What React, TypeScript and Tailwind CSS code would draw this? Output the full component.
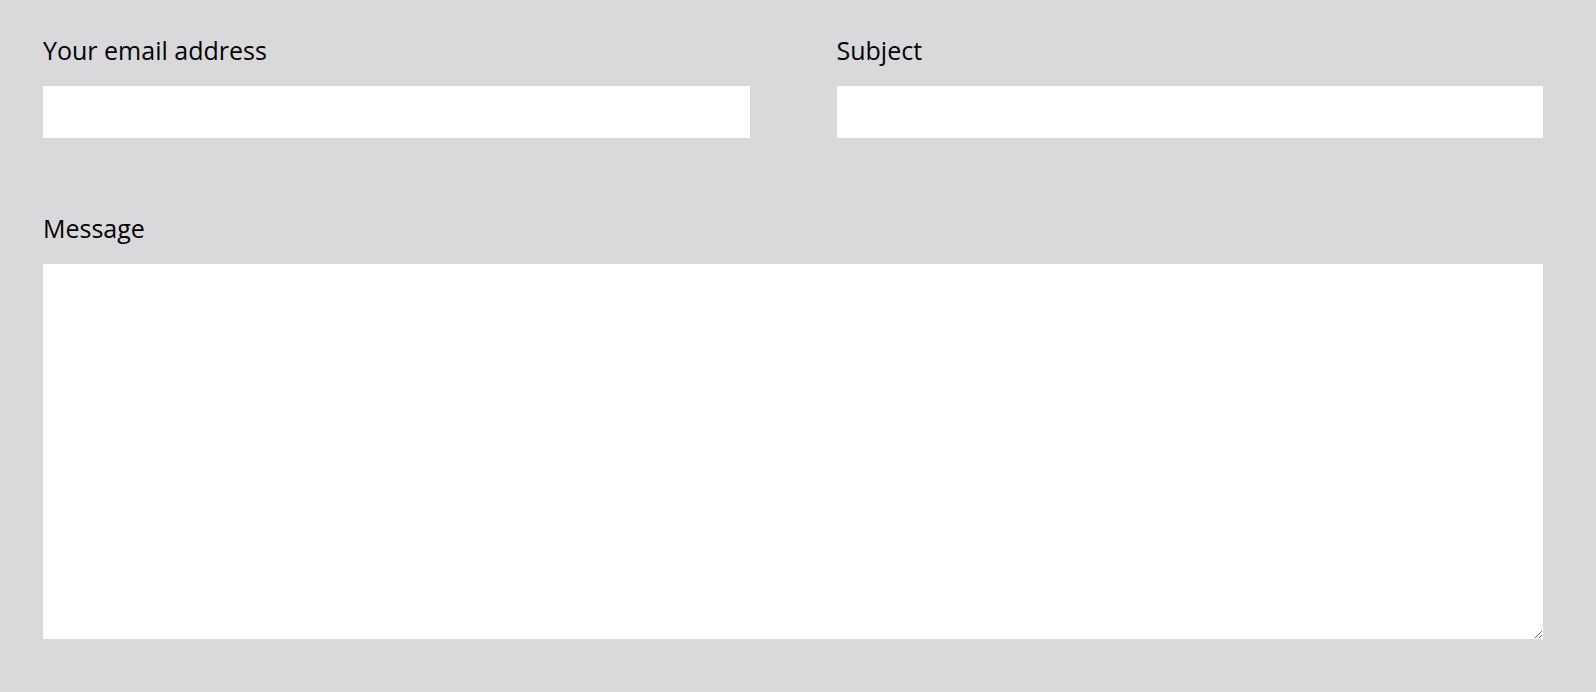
export default function App() {
  return (
    <div className="min-h-screen w-full bg-[#d9d9db] font-['Open_Sans',sans-serif] text-black">
      <form className="w-[1500px] ml-[43px] pt-[32px]">
        {/* Top row */}
        <div className="grid grid-cols-2 gap-[87px]">
          <label className="flex flex-col">
            <span className="text-[25px] leading-[36px]">Your email address</span>
            <input type="email" className="mt-[18px] h-[52px] w-full bg-white outline-none px-3" />
          </label>
          <label className="flex flex-col">
            <span className="text-[25px] leading-[36px]">Subject</span>
            <input type="text" className="mt-[18px] h-[52px] w-full bg-white outline-none px-3" />
          </label>
        </div>

        {/* Message */}
        <label className="flex flex-col mt-[72px]">
          <span className="text-[25px] leading-[36px]">Message</span>
          <textarea className="mt-[18px] h-[375px] w-full bg-white outline-none p-3" />
        </label>
      </form>
    </div>
  );
}
